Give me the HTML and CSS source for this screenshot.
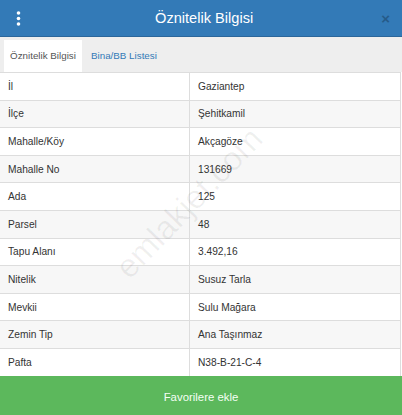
FILE: index.html
```html
<!DOCTYPE html>
<html lang="tr">
<head>
    <meta charset="UTF-8">
    <meta name="viewport" content="width=device-width, initial-scale=1.0">
    <title>Öznitelik Bilgisi</title>
    <link rel="stylesheet" href="styles.css">
</head>
<body>
    <div class="panel">
        <div class="panel-header">
            <span class="menu-icon">
                <svg width="5" height="15" viewBox="0 0 5 15">
                    <circle cx="2.5" cy="2" r="1.8" fill="#fff"/>
                    <circle cx="2.5" cy="7.5" r="1.8" fill="#fff"/>
                    <circle cx="2.5" cy="13" r="1.8" fill="#fff"/>
                </svg>
            </span>
            <h1 class="panel-title">Öznitelik Bilgisi</h1>
            <span class="close">&times;</span>
        </div>

        <ul class="tabs">
            <li class="tab active">Öznitelik Bilgisi</li>
            <li class="tab">Bina/BB Listesi</li>
        </ul>

        <table class="attr-table">
            <tr><td>İl</td><td>Gaziantep</td></tr>
            <tr><td>İlçe</td><td>Şehitkamil</td></tr>
            <tr><td>Mahalle/Köy</td><td>Akçagöze</td></tr>
            <tr><td>Mahalle No</td><td>131669</td></tr>
            <tr><td>Ada</td><td>125</td></tr>
            <tr><td>Parsel</td><td>48</td></tr>
            <tr><td>Tapu Alanı</td><td>3.492,16</td></tr>
            <tr><td>Nitelik</td><td>Susuz Tarla</td></tr>
            <tr><td>Mevkii</td><td>Sulu Mağara</td></tr>
            <tr><td>Zemin Tip</td><td>Ana Taşınmaz</td></tr>
            <tr><td>Pafta</td><td>N38-B-21-C-4</td></tr>
        </table>

        <button class="btn-fav">Favorilere ekle</button>

        <div class="watermark">emlakjet.com</div>
    </div>
</body>
</html>
```

FILE: styles.css
```css
body {
    margin: 0;
    padding: 0;
    background: #fff;
    font-family: "Liberation Sans", Arial, sans-serif;
    color: #333;
}

.panel {
    position: relative;
    width: 402px;
    height: 415px;
    overflow: hidden;
    display: flex;
    flex-direction: column;
}

.panel-header {
    height: 36px;
    background-color: #337ab7;
    border-bottom: 1px solid #2b669a;
    display: flex;
    align-items: center;
    padding: 0 12px 0 16px;
}

.menu-icon {
    width: 5px;
    height: 15px;
    display: flex;
}

.panel-title {
    flex: 1;
    margin: 0;
    text-align: center;
    font-size: 14.6px;
    font-weight: normal;
    color: #fff;
    padding-left: 6px;
}

.close {
    font-size: 15px;
    font-weight: bold;
    line-height: 1;
    color: #000;
    opacity: 0.25;
    padding-top: 1px;
}

.tabs {
    list-style: none;
    margin: 0;
    height: 32px;
    padding: 3px 0 0 4px;
    background-color: #eeeeee;
    display: flex;
}

.tab {
    height: 32px;
    line-height: 32px;
    padding: 0 7px 0 9px;
    font-size: 9.8px;
    color: #337ab7;
    white-space: nowrap;
}

.tab.active {
    width: 78px;
    box-sizing: border-box;
    padding: 0;
    background-color: #fff;
    color: #555;
    text-align: center;
}

.attr-table {
    width: 401px;
    border-collapse: collapse;
    border-right: 1px solid #ddd;
    font-size: 10.2px;
}

.attr-table td {
    height: 26.6px;
    padding: 0 8px;
    border-top: 1px solid #ddd;
    vertical-align: middle;
}

.attr-table td:first-child {
    width: 173px;
    border-right: 1px solid #ddd;
}

.attr-table tr:nth-child(even) td {
    background-color: #f7f7f7;
}

.btn-fav {
    flex: 1;
    width: 100%;
    border: 0;
    margin: 0;
    background-color: #5cb85c;
    color: #f4fff4;
    font-family: "Liberation Sans", Arial, sans-serif;
    font-size: 11.4px;
    padding: 3px 0 0;
}

.watermark {
    position: absolute;
    left: 92px;
    top: 184px;
    font-size: 33px;
    color: rgba(0, 0, 0, 0.06);
    transform: rotate(-46deg);
    pointer-events: none;
    white-space: nowrap;
}
```
